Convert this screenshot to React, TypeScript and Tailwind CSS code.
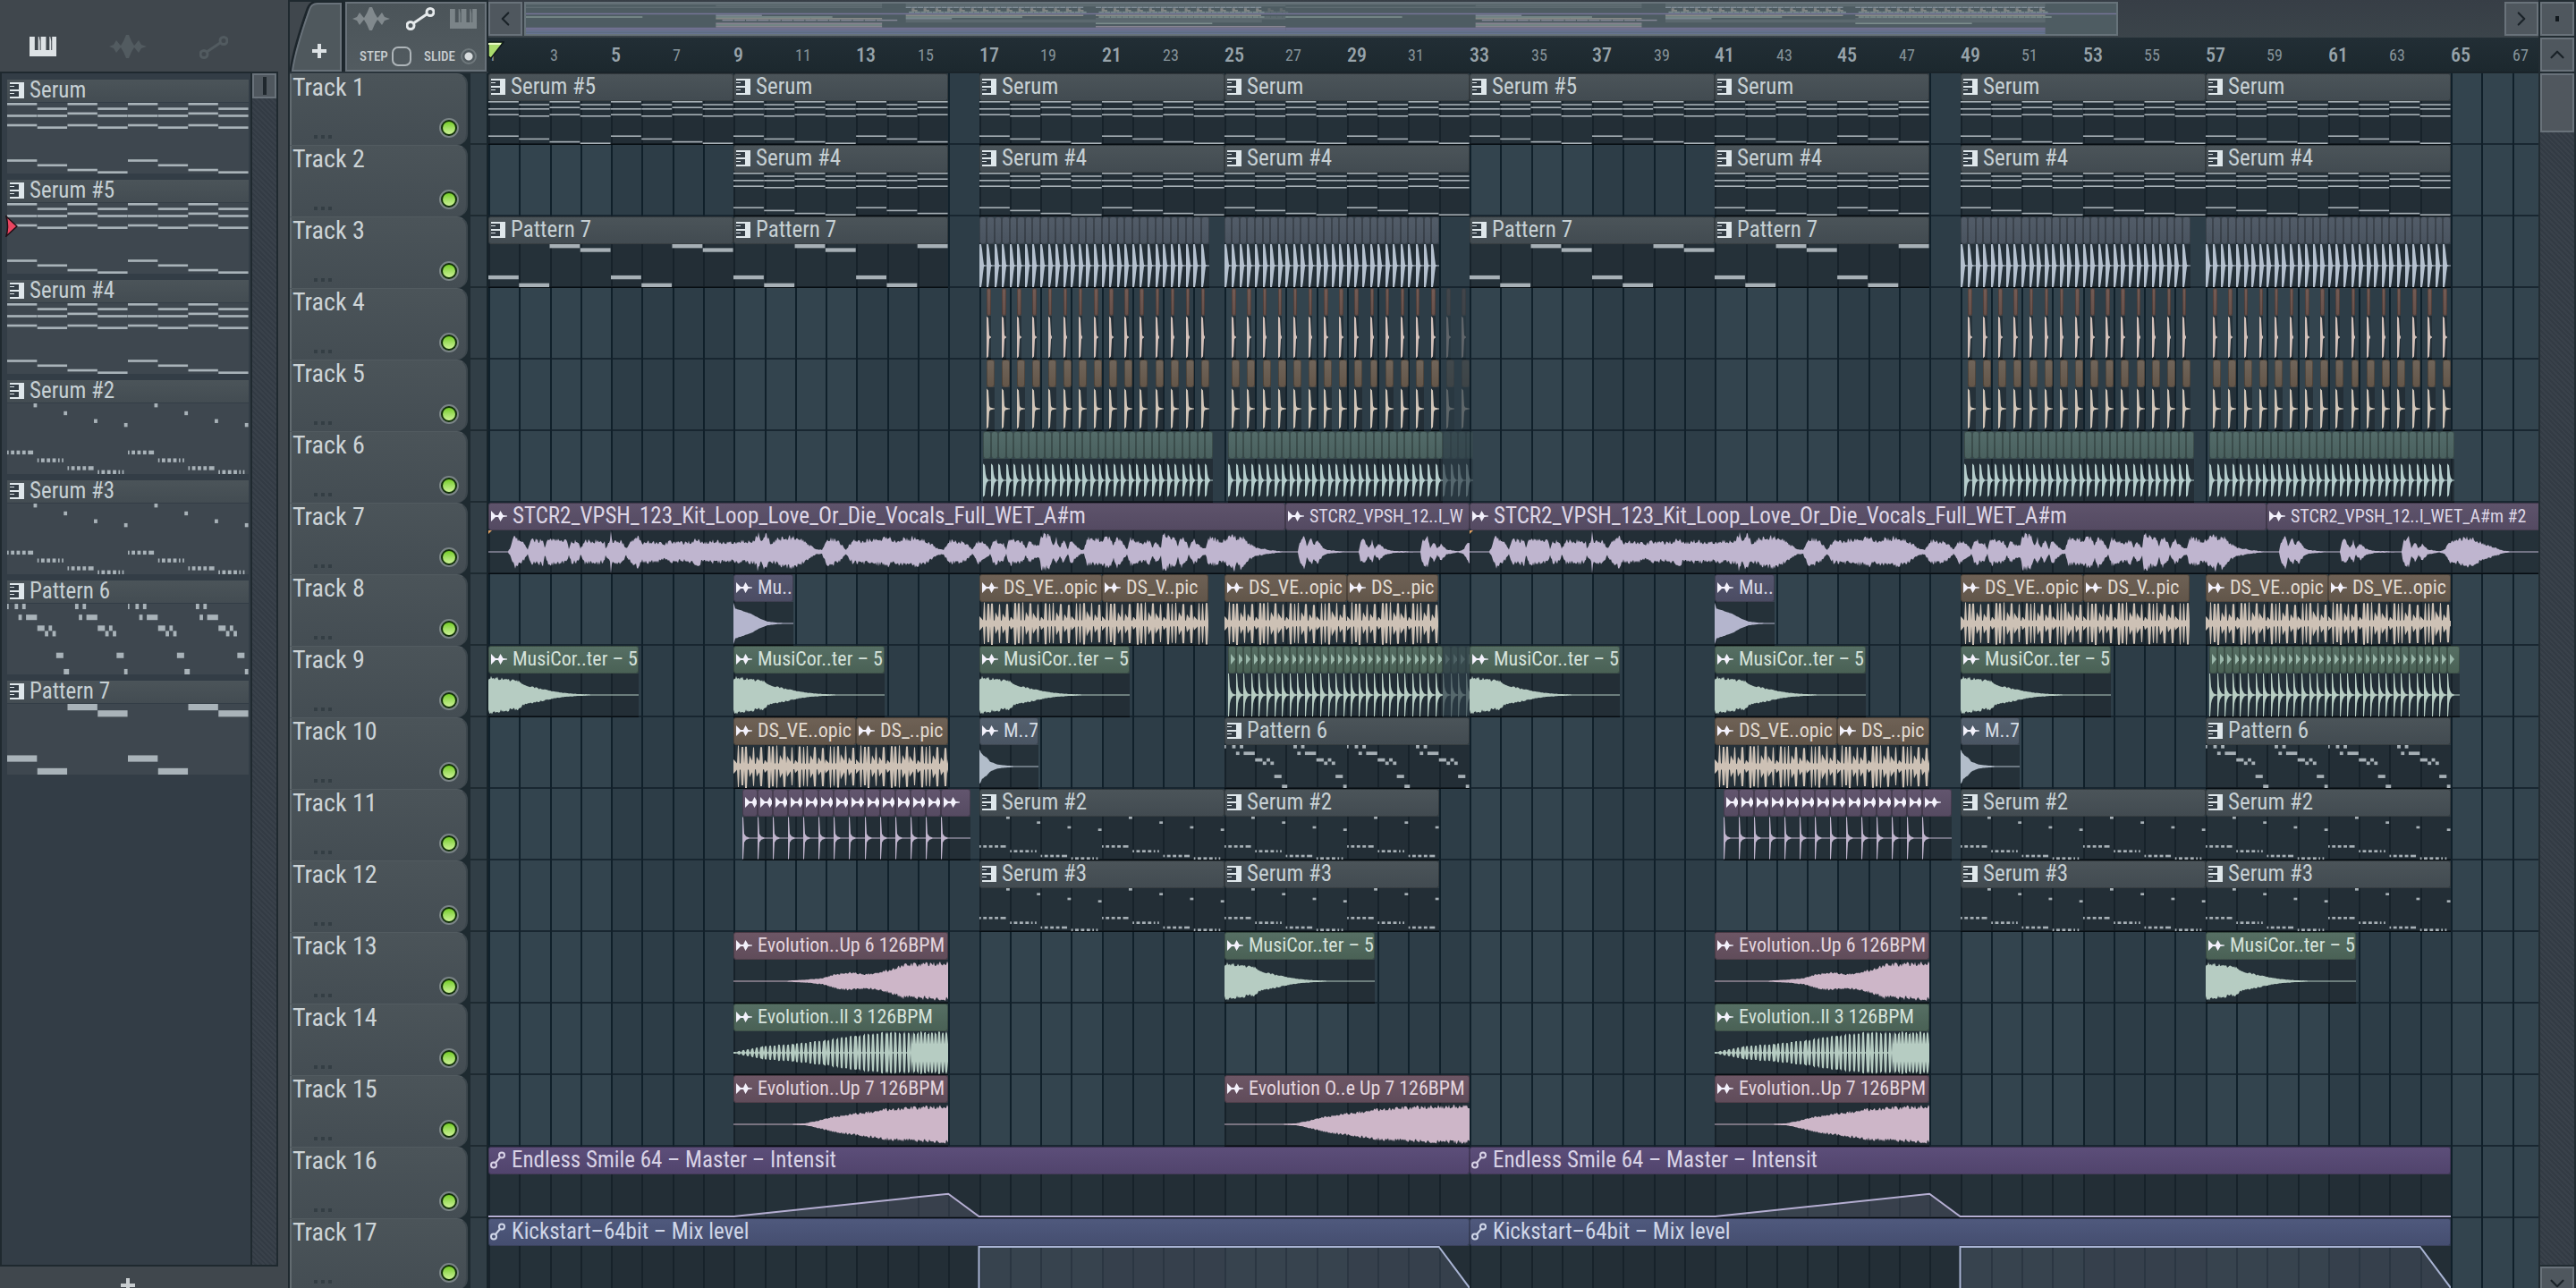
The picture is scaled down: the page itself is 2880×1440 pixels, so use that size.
import { ChevronDown, ChevronLeft, ChevronRight, ChevronUp } from "lucide-react";
import clsx from "clsx";

type Tone = "grey" | "vocal" | "violet" | "green" | "sand" | "slate" | "plum" | "rose" | "purple" | "blue" | "kick" | "snare" | "clap" | "hat";
type Point = [number, number];

type Clip = {
    at: number;
    len: number;
    label?: string;
    tone: Tone;
    notes?: keyof typeof NOTES;
    wave?: keyof typeof WAVES;
    curve?: Point[];
    icon?: "bare" | "play" | "audio";
    ghost?: boolean;
    marker?: boolean;
    size?: "sm" | "md" | "lg";
};

const BARS = 67;
// 64 bars take 2194px, edges are snapped to whole pixels
const barX = (bar: number) => Math.round(((bar - 1) * 2194) / 64);
const barW = (at: number, len: number) => barX(at + len) - barX(at);

const LABEL_SIZE = { sm: "text-[20px]", md: "text-[22px]", lg: "text-[25px]" };

const TONES: Record<Tone, { head: string; ink: string; text: string }> = {
    grey: { head: "from-[#4b5459] to-[#424b51]", ink: "text-[#a7b0b6]", text: "text-[#c6d0d4]" },
    vocal: { head: "from-[#5e536b] to-[#544a62]", ink: "text-[#bfb5cf]", text: "text-[#ddd6e6]" },
    violet: { head: "from-[#55566e] to-[#4b4c63]", ink: "text-[#b4b5cd]", text: "text-[#d8d8e6]" },
    green: { head: "from-[#566f64] to-[#4a6155]", ink: "text-[#b6ccc2]", text: "text-[#d5e2db]" },
    sand: { head: "from-[#6e6155] to-[#62564a]", ink: "text-[#cdc1b5]", text: "text-[#e2dad1]" },
    slate: { head: "from-[#54606e] to-[#4a5563]", ink: "text-[#b2bdca]", text: "text-[#d5dce4]" },
    plum: { head: "from-[#62556e] to-[#564b62]", ink: "text-[#bfb4cc]", text: "text-[#e6dcf0]" },
    rose: { head: "from-[#6d5665] to-[#604c5a]", ink: "text-[#cdb6c8]", text: "text-[#e4d5de]" },
    purple: { head: "from-[#5c4e79] to-[#51446d]", ink: "text-[#b5aed2]", text: "text-[#d8d2e6]" },
    blue: { head: "from-[#4f597d] to-[#454e70]", ink: "text-[#a9b4d4]", text: "text-[#cfd6e8]" },
    kick: { head: "from-[#525c68] to-[#4a5460]", ink: "text-[#b4c0ce]", text: "text-[#8b97a5]" },
    snare: { head: "from-[#735b54] to-[#66504a]", ink: "text-[#d2c0b9]", text: "text-[#d2c0b9]" },
    clap: { head: "from-[#70655a] to-[#645649]", ink: "text-[#d1c5b8]", text: "text-[#d1c5b8]" },
    hat: { head: "from-[#536b69] to-[#4a615f]", ink: "text-[#b4cccb]", text: "text-[#b4cccb]" },
};

// [row, first step, last step] with 16 steps in a bar
const chord = (bar: number, rows: number[]) => rows.map((r) => [r, bar * 16, bar * 16 + 16]);

const arp = (bar: number, high: number, low: number) => {
    const b = bar * 16;
    const tail = bar % 2 ? [[low, b + 11, b + 12], [low, b + 13, b + 14]] : [[low, b + 11, b + 14]];
    return [
        [low, b, b + 1],
        [low, b + 2, b + 4],
        [low, b + 5, b + 7],
        [low, b + 8, b + 10],
        ...tail,
        [high, b + 14, b + 16],
    ];
};

const NOTES = {
    chords: {
        rows: 30,
        loop: 64,
        list: [...chord(0, [0, 5, 9, 24]), ...chord(1, [2, 5, 10, 26]), ...chord(2, [0, 4, 9, 28]), ...chord(3, [2, 5, 10, 29])],
    },
    arp: {
        rows: 18,
        loop: 64,
        list: [...arp(0, 0, 12), ...arp(1, 2, 14), ...arp(2, 4, 16), ...arp(3, 5, 17)],
    },
    melody: {
        rows: 13,
        loop: 64,
        list: [
            [0, 0, 1],
            [12, 30, 33],
            [12, 62, 64],
            ...[0, 32].flatMap((s) => [
                [0, s + 4, s + 6],
                [0, s + 8, s + 10],
                [2, s + 6, s + 8],
                [2, s + 10, s + 16],
                [4, s + 16, s + 20],
                [4, s + 22, s + 24],
                [5, s + 20, s + 22],
                [5, s + 24, s + 26],
                [9, s + 26, s + 30],
            ]),
        ],
    },
    bass: {
        rows: 11,
        loop: 64,
        list: [[8, 0, 16], [10, 16, 32], [0, 32, 48], [1, 48, 64]],
    },
};

// Envelopes as [pixel, amplitude]
const VOCAL: Point[] = [
    [0, 0.02], [22, 0.02], [24, 0.2], [29, 0.85], [34, 0.6], [38, 0.58], [44, 0.14], [47, 0.68], [54, 0.62], [61, 0.68], [63, 0.2], [66, 0.62],
    [74, 0.68], [81, 0.62], [88, 0.58], [90, 0.18], [93, 0.58], [100, 0.58], [103, 0.18], [108, 0.62], [117, 0.58], [123, 0.62], [130, 0.5],
    [131, 0.18], [136, 0.58], [137, 1], [139, 0.58], [148, 0.62], [154, 0.22], [159, 0.58], [167, 0.85], [171, 0.5], [179, 0.58], [190, 0.52],
    [197, 0.42], [204, 0.58], [217, 0.5], [228, 0.56], [235, 0.75], [239, 0.5], [253, 0.6], [266, 0.48], [279, 0.56], [297, 0.58], [302, 1],
    [305, 0.58], [310, 1], [315, 0.5], [324, 0.7], [338, 0.82], [346, 0.76], [355, 0.5], [367, 0.12], [373, 0.12], [378, 0.68], [384, 0.7],
    [391, 0.58], [400, 0.12], [407, 0.6], [418, 0.6], [440, 0.7], [447, 0.88], [451, 0.56], [463, 0.7], [476, 0.78], [489, 0.62], [503, 0.17],
    [509, 0.12], [515, 0.62], [529, 0.56], [536, 0.4], [541, 0.12], [548, 0.62], [555, 0.45], [561, 0.12], [565, 0.68], [576, 0.45], [579, 0.12],
    [582, 0.68], [597, 0.58], [601, 0.22], [605, 0.58], [612, 0.35], [616, 0.35], [618, 0.95], [628, 0.85], [632, 0.35], [635, 0.72], [639, 0.22],
    [643, 0.68], [648, 0.12], [651, 0.62], [662, 0.12], [666, 0.12], [669, 0.72], [685, 0.7], [695, 0.85], [699, 0.35], [702, 0.85], [710, 0.45],
    [714, 0.12], [718, 0.7], [733, 0.52], [739, 0.62], [743, 0.22], [746, 0.62], [752, 0.22], [754, 0.95], [769, 0.7], [771, 0.35], [775, 0.85],
    [781, 0.45], [783, 0.17], [788, 0.68], [798, 0.22], [802, 0.17], [805, 0.8], [817, 0.6], [823, 0.6], [834, 1], [836, 0.6], [841, 0.95],
    [850, 0.45], [859, 0.22], [871, 0.12], [882, 0.05], [891, 0.02],
];

const VOCAL_END: Point[] = [
    [0, 0.02], [14, 0.02], [16, 0.5], [21, 0.85], [24, 0.35], [29, 0.7], [32, 0.35], [36, 0.62], [42, 0.22], [48, 0.09], [63, 0.03], [82, 0.02],
    [84, 0.5], [88, 0.68], [93, 0.22], [97, 0.58], [100, 0.17], [105, 0.45], [111, 0.17], [121, 0.05], [151, 0.02], [153, 0.62], [159, 0.85],
    [162, 0.22], [166, 0.52], [170, 0.17], [174, 0.45], [180, 0.14], [193, 0.03], [199, 0.12], [206, 0.6], [214, 0.6], [220, 0.75], [228, 0.75],
    [240, 0.48], [252, 0.28], [265, 0.06], [275, 0.02], [304, 0.02],
];

const RISE: Point[] = [
    [0, 0.02], [60, 0.02], [80, 0.05], [92, 0.16], [113, 0.4], [143, 0.58], [169, 0.76], [194, 0.84], [240, 0.92], [274, 0.92],
];

const DRUM_HITS = [0.35, 1, 0.95, 1, 0.6, 0.95, 0.5, 0.92];

const noise = (n: number) => {
    const s = Math.sin(n * 127.1 + 11.7) * 43758.5453;
    return s - Math.floor(s);
};

const envelope = (points: Point[], x: number) => {
    const i = points.findIndex((p) => p[0] > x);
    if (i === -1) return points[points.length - 1][1];
    if (i === 0) return points[0][1];
    const [x0, a0] = points[i - 1];
    const [x1, a1] = points[i];
    return a0 + ((a1 - a0) * (x - x0)) / (x1 - x0);
};

const rough = (points: Point[], amount: number) => (x: number, side: number) =>
    envelope(points, x) * (1 - amount * noise(x * 2 + side));

const WAVES = {
    vocal: rough(VOCAL, 0.35),
    vocalEnd: rough(VOCAL_END, 0.3),
    pluck: rough([[0, 0.8], [3, 0.98], [8, 0.88], [20, 0.8], [34, 0.7], [40, 0.5], [55, 0.36], [70, 0.2], [85, 0.1], [100, 0.05], [120, 0.02]], 0.2),
    thump: rough([[0, 1], [2, 0.72], [10, 0.6], [20, 0.45], [30, 0.22], [38, 0.09], [50, 0.03], [66, 0.02]], 0.04),
    short: rough([[0, 0.85], [3, 0.62], [8, 0.45], [12, 0.24], [20, 0.1], [30, 0.05], [40, 0.02]], 0.1),
    rise: rough(RISE, 0.22),
    swell: rough([[0, 0.02], [57, 0.02], [82, 0.08], [100, 0.16], [115, 0.38], [130, 0.44], [148, 0.36], [166, 0.48], [176, 0.6], [189, 0.85], [240, 0.94]], 0.24),
    roll: (x: number) => {
        const env = envelope([[0, 0.03], [10, 0.12], [35, 0.34], [60, 0.42], [100, 0.6], [130, 0.85], [170, 1], [240, 1]], x);
        const on = x > 198 ? x % 4 !== 0 : x % 5 < 3 || (x % 35 > 28 && x % 5 < 4);
        return on ? env * (0.85 + 0.15 * noise(x)) : x > 198 ? 0.4 : 0.03;
    },
    drums: (x: number, side: number) => {
        const pos = (x * 64 * 8) / 2194;
        const hit = Math.floor(pos);
        const amp = DRUM_HITS[hit % 8];
        const t = pos - hit;
        const fall = amp > 0.9 ? (t < 0.6 ? 1 : 0.15) : Math.max(0.2, 1 - t * 0.6);
        return Math.max(0.03, amp * fall * (0.92 + 0.08 * noise(hit + side)));
    },
    kick: rough([[0, 1], [2, 1], [3, 0.75], [4, 0.35], [5, 0.04], [7, 0.02]], 0),
    snare: rough([[0, 0.98], [2, 0.9], [3, 0.1], [4, 0.03]], 0),
    clap: rough([[0, 0.95], [2, 0.85], [3, 0.15], [4, 0.06], [8, 0.02]], 0),
    hat: rough([[0, 0.78], [2, 0.7], [3, 0.3], [4, 0.12], [6, 0.02]], 0),
    tick: rough([[0, 1], [1, 1], [2, 0.4], [3, 0.22], [5, 0.07], [8, 0.02]], 0),
    snap: rough([[0, 0.98], [1, 0.98], [2, 0.2], [4, 0.08], [8, 0.02]], 0),
};

const pattern = (label: string, notes: Clip["notes"], at: number, len: number): Clip => ({ at, len, label, tone: "grey", notes });
const audio = (label: string, tone: Tone, wave: Clip["wave"], at: number, len: number): Clip => ({
    at,
    len,
    label,
    tone,
    wave,
    icon: "audio",
    size: "md",
});

const hits = (tone: Tone, wave: Clip["wave"], at: number, count: number, step: number, len: number, icon: Clip["icon"] = "bare", ghost = false): Clip[] =>
    Array.from({ length: count }, (_, i) => ({ at: at + i * step, len, tone, wave, icon, ghost }));

const vocals = (at: number): Clip => ({
    ...audio("STCR2_VPSH_123_Kit_Loop_Love_Or_Die_Vocals_Full_WET_A#m", "vocal", "vocal", at, 26),
    marker: true,
    size: "lg",
});
const vocalsEnd = (label: string, at: number, len: number): Clip => ({ ...audio(label, "vocal", "vocalEnd", at, len), size: "sm" });
const pluck = (at: number) => audio("MusiCor..ter – 5", "green", "pluck", at, 4.91);
const drums = (label: string, at: number, len: number) => audio(label, "sand", "drums", at, len);
const snaps = (at: number): Clip[] => [
    ...hits("plum", "snap", at, 13, 0.5, 0.5, "audio"),
    { at: at + 6.5, len: 0.95, tone: "plum", wave: "snap", icon: "audio" },
];

const intensity: Point[] = [[0, 0], [8, 0], [15, 0.55], [16, 0], [32, 0]];
const mixLevel: Point[] = [[0, -0.1], [16, -0.1], [16, 1], [31, 1], [32, 0]];

const TRACKS: Clip[][] = [
    [
        pattern("Serum #5", "chords", 1, 8),
        pattern("Serum", "chords", 9, 7),
        pattern("Serum", "chords", 17, 8),
        pattern("Serum", "chords", 25, 8),
        pattern("Serum #5", "chords", 33, 8),
        pattern("Serum", "chords", 41, 7),
        pattern("Serum", "chords", 49, 8),
        pattern("Serum", "chords", 57, 8),
    ],
    [
        pattern("Serum #4", "chords", 9, 7),
        pattern("Serum #4", "chords", 17, 8),
        pattern("Serum #4", "chords", 25, 8),
        pattern("Serum #4", "chords", 41, 7),
        pattern("Serum #4", "chords", 49, 8),
        pattern("Serum #4", "chords", 57, 8),
    ],
    [
        pattern("Pattern 7", "bass", 1, 8),
        pattern("Pattern 7", "bass", 9, 7),
        ...hits("kick", "kick", 17, 30, 0.25, 0.25),
        ...hits("kick", "kick", 25, 28, 0.25, 0.25),
        pattern("Pattern 7", "bass", 33, 8),
        pattern("Pattern 7", "bass", 41, 7),
        ...hits("kick", "kick", 49, 30, 0.25, 0.25),
        ...hits("kick", "kick", 57, 32, 0.25, 0.25),
    ],
    [
        ...hits("snare", "snare", 17.25, 15, 0.5, 0.13),
        ...hits("snare", "snare", 25.25, 14, 0.5, 0.13),
        ...hits("snare", "snare", 32.25, 2, 0.5, 0.13, "bare", true),
        ...hits("snare", "snare", 49.25, 15, 0.5, 0.13),
        ...hits("snare", "snare", 57.25, 16, 0.5, 0.13),
    ],
    [
        ...hits("clap", "clap", 17.25, 15, 0.5, 0.26),
        ...hits("clap", "clap", 25.25, 14, 0.5, 0.26),
        ...hits("clap", "clap", 32.25, 2, 0.5, 0.26, "bare", true),
        ...hits("clap", "clap", 49.25, 15, 0.5, 0.26),
        ...hits("clap", "clap", 57.25, 16, 0.5, 0.26),
    ],
    [
        ...hits("hat", "hat", 17.13, 30, 0.25, 0.25),
        ...hits("hat", "hat", 25.13, 28, 0.25, 0.25),
        ...hits("hat", "hat", 32.13, 4, 0.25, 0.25, "bare", true),
        ...hits("hat", "hat", 49.13, 30, 0.25, 0.25),
        ...hits("hat", "hat", 57.13, 32, 0.25, 0.25),
    ],
    [
        vocals(1),
        vocalsEnd("STCR2_VPSH_12..l_W", 27, 6),
        vocals(33),
        vocalsEnd("STCR2_VPSH_12..l_WET_A#m #2", 59, 9),
    ],
    [
        audio("Mu..", "violet", "thump", 9, 1.94),
        drums("DS_VE..opic", 17, 4),
        drums("DS_V..pic", 21, 3.48),
        drums("DS_VE..opic", 25, 4),
        drums("DS_..pic", 29, 2.97),
        audio("Mu..", "violet", "thump", 41, 1.94),
        drums("DS_VE..opic", 49, 4),
        drums("DS_V..pic", 53, 3.48),
        drums("DS_VE..opic", 57, 4),
        drums("DS_VE..opic", 61, 4),
    ],
    [
        pluck(1),
        pluck(9),
        pluck(17),
        ...hits("green", "tick", 25.13, 28, 0.25, 0.25, "play"),
        ...hits("green", "tick", 32.13, 4, 0.25, 0.25, "play", true),
        pluck(33),
        pluck(41),
        pluck(49),
        ...hits("green", "tick", 57.13, 31, 0.25, 0.25, "play"),
        { at: 64.88, len: 0.42, tone: "green", wave: "tick", icon: "play" },
    ],
    [
        drums("DS_VE..opic", 9, 4),
        drums("DS_..pic", 13, 3),
        audio("M..7", "slate", "short", 17, 1.94),
        pattern("Pattern 6", "melody", 25, 8),
        drums("DS_VE..opic", 41, 4),
        drums("DS_..pic", 45, 3),
        audio("M..7", "slate", "short", 49, 1.94),
        pattern("Pattern 6", "melody", 57, 8),
    ],
    [
        ...snaps(9.27),
        pattern("Serum #2", "arp", 17, 8),
        pattern("Serum #2", "arp", 25, 7),
        ...snaps(41.27),
        pattern("Serum #2", "arp", 49, 8),
        pattern("Serum #2", "arp", 57, 8),
    ],
    [
        pattern("Serum #3", "arp", 17, 8),
        pattern("Serum #3", "arp", 25, 7),
        pattern("Serum #3", "arp", 49, 8),
        pattern("Serum #3", "arp", 57, 8),
    ],
    [
        audio("Evolution..Up 6 126BPM", "rose", "swell", 9, 7),
        pluck(25),
        audio("Evolution..Up 6 126BPM", "rose", "swell", 41, 7),
        pluck(57),
    ],
    [
        audio("Evolution..ll 3 126BPM", "green", "roll", 9, 7),
        audio("Evolution..ll 3 126BPM", "green", "roll", 41, 7),
    ],
    [
        audio("Evolution..Up 7 126BPM", "rose", "rise", 9, 7),
        audio("Evolution O..e Up 7 126BPM", "rose", "rise", 25, 8),
        audio("Evolution..Up 7 126BPM", "rose", "rise", 41, 7),
    ],
    [1, 33].map((at) => ({ at, len: 32, label: "Endless Smile 64 – Master – Intensit", tone: "purple", curve: intensity })),
    [1, 33].map((at) => ({ at, len: 32, label: "Kickstart–64bit – Mix level", tone: "blue", curve: mixLevel })),
];

const PATTERNS: { name: string; notes: keyof typeof NOTES }[] = [
    { name: "Serum", notes: "chords" },
    { name: "Serum #5", notes: "chords" },
    { name: "Serum #4", notes: "chords" },
    { name: "Serum #2", notes: "arp" },
    { name: "Serum #3", notes: "arp" },
    { name: "Pattern 6", notes: "melody" },
    { name: "Pattern 7", notes: "bass" },
];

function KeysIcon({ className }: { className?: string }) {
    return (
        <svg viewBox="0 0 30 22" className={clsx("h-[22px] w-[30px] fill-current", className)}>
            <path d="M0 0h6v15h4V0h1l1 5v10h1V0h6v15h4V0h1l1 5v10h1V0h5v22H0z" transform="scale(0.97 1)" />
        </svg>
    );
}

function WaveIcon({ className }: { className?: string }) {
    return (
        <svg viewBox="0 0 42 28" className={clsx("h-7 w-[42px] fill-current", className)}>
            <path d="M0 14l5-2 3-5 4 5 1 1 3-5 3-7h3l3 7 3 5 1-1 4-5 3 5 6 2-6 2-3 5-4-5-1-1-3 5-3 7h-3l-3-7-3-5-1 1-4 5-3-5z" />
        </svg>
    );
}

function CurveIcon({ className }: { className?: string }) {
    return (
        <svg viewBox="0 0 32 26" className={clsx("h-[26px] w-8 fill-none stroke-current", className)} strokeWidth="3">
            <circle cx="27" cy="5.5" r="4" />
            <circle cx="5" cy="20.5" r="4" />
            <path d="M9 17.5L23 8" />
        </svg>
    );
}

function PatternIcon() {
    return (
        <svg viewBox="0 0 16 18" className="h-[18px] w-4 shrink-0">
            <path d="M10 2H0v14h10z" fill="#333d45" />
            <path d="M0 0h16v18H0v-2h10v-6H0V8h10V2H0zM0 4h5v1H0zM0 12h5v1H0z" fill="#dfe7eb" />
        </svg>
    );
}

function AudioIcon() {
    return (
        <svg viewBox="0 0 18 14" className="h-[14px] w-[18px] shrink-0" fill="#f3f1fb">
            <path d="M0 1l5 5h3l2.500-5 3 5 4.500.5v1l-4.500.5-3 5L8 8H5l-5 5z" />
        </svg>
    );
}

function LinkIcon() {
    return (
        <svg viewBox="0 0 17 20" className="h-5 w-[17px] shrink-0 fill-none stroke-current" strokeWidth="2">
            <circle cx="13" cy="4.5" r="3" />
            <circle cx="4" cy="15.5" r="3" />
            <path d="M6 13l5-6" />
        </svg>
    );
}

function Notes({ kind, bars, className }: { kind: keyof typeof NOTES; bars: number; className?: string }) {
    const { rows, loop, list } = NOTES[kind];
    const steps = bars * 16;
    const repeats = Math.ceil(steps / loop);

    return (
        <svg viewBox={`0 0 ${steps} ${rows}`} preserveAspectRatio="none" className={clsx("block w-full fill-current", className)}>
            {Array.from({ length: repeats }, (_, r) =>
                list.map(([row, from, to], i) => (
                    <rect key={`${r}-${i}`} x={from + r * loop} y={row} width={to - from - 0.2} height="1" />
                ))
            )}
        </svg>
    );
}

function Wave({ kind, width }: { kind: keyof typeof WAVES; width: number }) {
    const shape = WAVES[kind];
    const xs = Array.from({ length: width + 1 }, (_, x) => x);
    const top = xs.map((x) => `${x},${(24 - Math.max(0.5, shape(x, 0) * 24)).toFixed(1)}`);
    const bottom = xs.map((x) => `${x},${(24 + Math.max(0.5, shape(x, 1) * 24)).toFixed(1)}`).reverse();

    return (
        <svg viewBox={`0 0 ${width} 48`} className="block h-12 w-full fill-current" preserveAspectRatio="none">
            <polygon points={[...top, ...bottom].join(" ")} />
        </svg>
    );
}

function Curve({ points, bars }: { points: Point[]; bars: number }) {
    const line = points.map(([x, y]) => `${x},${47 - y * 46}`).join(" ");

    return (
        <svg viewBox={`0 0 ${bars} 48`} className="block h-12 w-full" preserveAspectRatio="none">
            <polygon points={`0,48 ${line} ${bars},48`} fill="currentColor" fillOpacity="0.14" />
            <polyline points={line} fill="none" stroke="currentColor" strokeWidth="2" vectorEffect="non-scaling-stroke" />
        </svg>
    );
}

function ClipView({ clip }: { clip: Clip }) {
    const tone = TONES[clip.tone];
    const width = barW(clip.at, clip.len);

    return (
        <div
            className={clsx("absolute top-0 h-20 border-b-2 border-[#060d12]", clip.ghost && "opacity-30")}
            style={{ left: barX(clip.at), width }}
        >
            <div
                className={clsx(
                    "flex h-[31px] items-center overflow-hidden rounded-[3px] border border-black/25 bg-linear-to-b pb-0.5 whitespace-nowrap",
                    tone.head,
                    tone.text,
                    clip.curve ? "gap-[7px] pl-px" : "gap-1.5 pl-[2px]"
                )}
            >
                {clip.notes && <PatternIcon />}
                {clip.icon === "audio" && <AudioIcon />}
                {clip.curve && <LinkIcon />}
                {clip.icon === "play" && (
                    <svg viewBox="0 0 5 12" className="h-3 w-[5px] shrink-0 fill-[#9bb8ab]">
                        <path d="M0 0l5 6-5 6z" />
                    </svg>
                )}
                {clip.label && <span className={clsx("leading-7", LABEL_SIZE[clip.size ?? "lg"])}>{clip.label}</span>}
            </div>
            <div className={clsx("relative h-12 overflow-hidden bg-[#1d252c]/60", tone.ink)}>
                {clip.notes && <Notes kind={clip.notes} bars={clip.len} className="h-12" />}
                {clip.wave && <Wave kind={clip.wave} width={width} />}
                {clip.curve && <Curve points={clip.curve} bars={clip.len} />}
                {clip.marker && (
                    <svg viewBox="0 0 4 4" className="absolute top-0 left-0 size-1 fill-[#e0a060]">
                        <path d="M0 0h4L0 4z" />
                    </svg>
                )}
            </div>
        </div>
    );
}

function Browser() {
    return (
        <aside className="flex w-[322px] shrink-0 flex-col bg-[#40474d]">
            <div className="flex h-20 shrink-0 items-end justify-between pr-[67px] pb-[14px] pl-[33px]">
                <button aria-label="Patterns" className="pb-[3px] text-[#dde2e5]">
                    <KeysIcon />
                </button>
                <button aria-label="Audio clips" className="text-[#525b60]">
                    <WaveIcon />
                </button>
                <button aria-label="Automation clips" className="text-[#525b60]">
                    <CurveIcon />
                </button>
            </div>

            <div className="mr-[11px] flex min-h-0 flex-1 border-2 border-[#1f292f] bg-[#333d46]">
                <ul className="flex min-w-0 flex-1 flex-col gap-[7px] overflow-hidden pt-[7px] pr-0.5 pl-1.5">
                    {PATTERNS.map((p) => (
                        <li key={p.name} className="relative shrink-0">
                            <button className="mb-px flex h-[25px] w-full items-center gap-1.5 bg-linear-to-b from-[#4b5459] to-[#434c52] px-[3px] pb-0.5 text-[25px] text-[#c6d0d4]">
                                <PatternIcon />
                                {p.name}
                            </button>
                            <Notes kind={p.notes} bars={8} className="h-[79px] bg-[#3e474f] text-[#a9b3b9]" />
                            {p.name === "Serum #5" && (
                                <svg viewBox="0 0 14 24" className="absolute top-[40px] left-[-2px] h-6 w-[14px]">
                                    <path d="M1 1l12 11L1 23q3-11 0-22z" fill="#ea4560" stroke="#1f1016" strokeWidth="1.500" />
                                </svg>
                            )}
                        </li>
                    ))}
                </ul>
                <div className="w-[29px] border-l-2 border-[#1f292f] bg-[repeating-linear-gradient(45deg,#39414a_0_2px,#333b44_2px_4px)]">
                    <button aria-label="Scroll patterns" className="flex h-7 w-full items-center justify-center border-2 border-[#69727a] bg-[#4f575e]">
                        <span className="h-5 w-1 bg-[#1f272d]" />
                    </button>
                </div>
            </div>

            <button aria-label="Add pattern" className="flex h-6 shrink-0 items-start justify-center pt-[13px] pr-9 text-[#c8cdd0]">
                <svg viewBox="0 0 16 16" className="size-4 shrink-0 fill-current">
                    <path d="M6 0h4v6h6v4h-6v6H6v-6H0V6h6z" />
                </svg>
            </button>
        </aside>
    );
}

function ToolBox() {
    return (
        <div className="flex h-20 w-[222px] shrink-0 bg-[#1f292f] pt-0.5">
            <button aria-label="Add track" className="relative h-[78px] w-[60px] bg-[#40474d]">
                <svg viewBox="0 0 60 78" className="h-full w-full">
                    <path d="M1 78C4 55 14 25 20 8Q23 0 31 0H59V78z" fill="#4f585d" stroke="#1c252b" strokeWidth="3" />
                    <path d="M3 77C6 55 16 26 22 9Q24 2 31 2H57V77z" fill="none" stroke="#69727a" strokeWidth="2" />
                    <path d="M31 47h4v6h6v4h-6v6h-4v-6h-6v-4h6z" fill="#dde2e5" />
                </svg>
            </button>
            <div className="mr-0.5 ml-0.5 flex flex-1 flex-col justify-between border-2 border-[#69727a] bg-linear-to-b from-[#4b5459] to-[#525b60] pt-[3px] pr-[9px] pb-1 pl-1.5">
                <div className="flex items-center justify-between">
                    <button aria-label="Audio mode" className="text-[#81898d]">
                        <WaveIcon />
                    </button>
                    <button aria-label="Automation mode" className="text-[#e6eaec]">
                        <CurveIcon />
                    </button>
                    <button aria-label="Pattern mode" className="text-[#7b8488]">
                        <KeysIcon />
                    </button>
                </div>
                <div className="flex items-center justify-between pl-2 text-[15px] font-medium text-[#c8cdd0]">
                    <label className="flex items-center gap-1">
                        STEP
                        <input type="checkbox" className="size-[22px] appearance-none rounded-[7px] border-2 border-[#aeb5b9]" />
                    </label>
                    <label className="flex items-center gap-1.5">
                        SLIDE
                        <input
                            type="radio"
                            defaultChecked
                            className="size-[18px] appearance-none rounded-full border-2 border-[#70797d] bg-[radial-gradient(circle,#d8dcde_0_4px,transparent_5px)]"
                        />
                    </label>
                </div>
            </div>
        </div>
    );
}

function Overview() {
    return (
        <div className="flex h-[42px] items-start bg-linear-to-b from-[#373e46] to-[#3b444a] pt-0.5">
            <button aria-label="Scroll left" className="mr-0.5 flex h-[38px] w-[38px] shrink-0 items-center justify-center border-2 border-[#69727a] bg-[#4f575e] text-[#1a2228]">
                <ChevronLeft size={26} strokeWidth={2} />
            </button>
            <div className="min-w-0 flex-1">
                <div className="h-[38px] w-[80.5%] border-2 border-[#67737a] bg-[#4e5c62]">
                    <svg viewBox={`1 0 ${BARS} 19`} className="block h-full w-full opacity-50" preserveAspectRatio="none">
                        {TRACKS.map((clips, row) =>
                            clips.map((c, i) => (
                                <rect
                                    key={`${row}-${i}`}
                                    x={c.at}
                                    y={row}
                                    width={c.len > 1 ? c.len : c.len * 0.92}
                                    height="0.8"
                                    fill="currentColor"
                                    className={clsx(
                                        c.tone === "purple" || c.tone === "blue" || c.tone === "vocal" ? "text-[#a08fd0]" : TONES[c.tone].ink,
                                        (c.tone === "grey" || c.ghost) && "opacity-40"
                                    )}
                                />
                            ))
                        )}
                        <path d="M1 17h64v0.800h-64zM1 18.200h64v0.700h-64z" fill="#8f9be0" />
                    </svg>
                </div>
            </div>
            <button aria-label="Scroll right" className="flex h-[38px] w-[38px] shrink-0 items-center justify-center border-2 border-[#69727a] bg-[#4f575e] text-[#1a2228]">
                <ChevronRight size={26} strokeWidth={2} />
            </button>
        </div>
    );
}

function Ruler() {
    const bars = Array.from({ length: Math.ceil(BARS / 2) }, (_, i) => i * 2 + 1);

    return (
        <div className="relative flex h-10 items-start overflow-hidden border-b-2 border-[#1a242a] bg-linear-to-b from-[#222e35] to-[#1c282e]">
            {bars.map((bar) => (
                <span
                    key={bar}
                    className={clsx(
                        "shrink-0 leading-10",
                        bar % 4 === 1 && bar > 1 ? "text-[22px] font-medium text-[#98a4ab]" : "text-[18px] text-[#86939a]"
                    )}
                    style={{ width: barW(bar, 2) }}
                >
                    {bar}
                </span>
            ))}
            <svg viewBox="0 0 18 20" className="absolute top-1 left-0 h-5 w-[18px]">
                <path d="M0 1h17L3 19l-3-2z" fill="#aadb6c" stroke="#0f171b" strokeWidth="1.500" />
                <path d="M0 3h14" stroke="#e9f8c6" strokeWidth="2" />
            </svg>
        </div>
    );
}

function TrackHeader({ n }: { n: number }) {
    return (
        <div className="flex h-20 shrink-0 bg-[#1e2a30]">
            <div className="flex w-[199px] justify-between rounded-r-xl border-t border-r-2 border-l-2 border-t-[#525b60] border-r-[#3c464c] border-l-[#626b70] bg-linear-to-b from-[#4b5459] to-[#444d53] pr-2 pl-px">
                <div className="flex flex-col justify-between pt-px pb-[7px]">
                    <span className="text-[28px] leading-7 text-[#cdd4d7]">Track {n}</span>
                    <span className="flex gap-1 pl-6">
                        <i className="size-1 bg-[#343e44]" />
                        <i className="size-1 bg-[#343e44]" />
                        <i className="size-1 bg-[#343e44]" />
                    </span>
                </div>
                <button
                    aria-label={`Mute track ${n}`}
                    className="mb-2 size-[22px] self-end rounded-full border-2 border-[#7b8487] bg-[#12300a] p-0.5"
                >
                    <span className="block size-full rounded-full bg-linear-to-b from-[#74cc1c] to-[#ccf294]" />
                </button>
            </div>
            <div className="ml-[3px] w-[18px] border-b-2 border-[#1e2a31] bg-[#313e46]" />
        </div>
    );
}

function Arrangement() {
    const cells = Array.from({ length: BARS + 1 }, (_, i) => i + 1);

    return (
        <div className="relative min-w-0 flex-1 overflow-hidden">
            <div className="absolute inset-0 flex">
                {cells.map((bar) => (
                    <div
                        key={bar}
                        className={clsx("h-full shrink-0 border-l-2 border-[#10202a]", (bar - 1) % 8 < 4 ? "bg-[#33444e]" : "bg-[#2d3d47]")}
                        style={{ width: barW(bar, 1) }}
                    />
                ))}
            </div>
            {TRACKS.map((clips, i) => (
                <div key={i} className="relative h-20 border-b-2 border-[#13202a]/80">
                    {clips.map((clip, j) => (
                        <ClipView key={j} clip={clip} />
                    ))}
                </div>
            ))}
        </div>
    );
}

function VerticalScroll() {
    return (
        <div className="flex w-[42px] shrink-0 flex-col items-center gap-0.5 bg-[#222c32] pt-0.5">
            <button aria-label="Options" className="flex size-[38px] shrink-0 items-center justify-center border-2 border-[#69727a] bg-[#4f575e]">
                <span className="h-1.5 w-1 bg-[#12191e]" />
            </button>
            <button aria-label="Scroll up" className="flex size-[38px] shrink-0 items-center justify-center border-2 border-[#69727a] bg-[#4f575e] text-[#1a2228]">
                <ChevronUp size={26} strokeWidth={2} />
            </button>
            <div className="w-[38px] flex-1 bg-[repeating-linear-gradient(45deg,#39414a_0_2px,#333b44_2px_4px)]">
                <div className="h-[66px] border-2 border-[#69727a] bg-[#50575e]" />
            </div>
            <button aria-label="Scroll down" className="flex h-6 w-[38px] shrink-0 items-start justify-center overflow-hidden border-2 border-b-0 border-[#69727a] bg-[#4f575e] pt-1 text-[#1a2228]">
                <ChevronDown size={26} strokeWidth={2} className="shrink-0" />
            </button>
        </div>
    );
}

export default function App() {
    return (
        <div className="flex h-screen overflow-hidden bg-[#2a343b] font-['Liberation_Sans_Narrow','Roboto_Condensed','Roboto',sans-serif]">
            <Browser />
            <main className="flex min-w-0 flex-1 flex-col border-l-2 border-[#1f292f]">
                <div className="flex h-[82px] shrink-0">
                    <ToolBox />
                    <div className="min-w-0 flex-1">
                        <Overview />
                        <Ruler />
                    </div>
                </div>
                <div className="flex min-h-0 flex-1 overflow-hidden">
                    <div className="w-[222px] shrink-0 border-r-2 border-[#17232a]">
                        {TRACKS.map((_, i) => (
                            <TrackHeader key={i} n={i + 1} />
                        ))}
                    </div>
                    <Arrangement />
                </div>
            </main>
            <VerticalScroll />
        </div>
    );
}
